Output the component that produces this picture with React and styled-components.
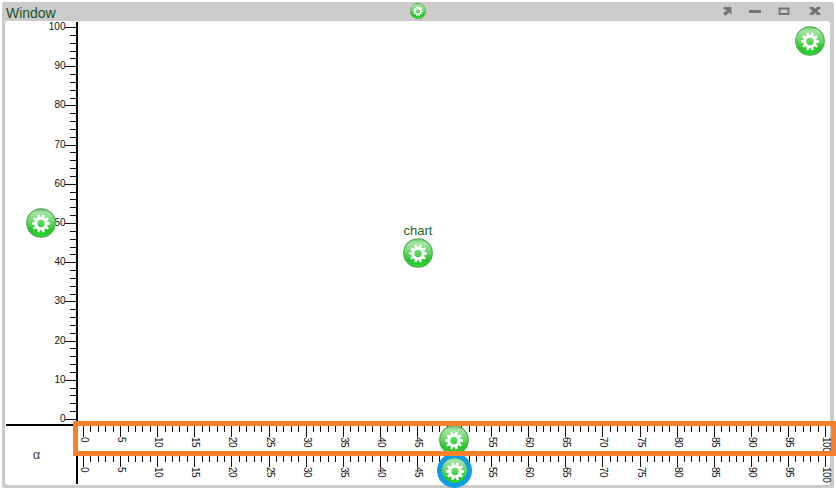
import React from "react";
import styled, { createGlobalStyle } from "styled-components";

const Global = createGlobalStyle`
  html, body { margin: 0; width: 836px; height: 488px; overflow: hidden; background: #fff; }
  * { box-sizing: border-box; }
`;

const Desktop = styled.div`
  position: relative;
  width: 836px;
  height: 488px;
  padding: 2px 2px 0 2px;
  font-family: "Liberation Sans", Arial, sans-serif;
  background: radial-gradient(circle, #cfe0d4 0.8px, transparent 1px) -1px -17px / 58.5px 119px #fff;
`;

const Window = styled.section`
  display: flex;
  flex-direction: column;
  width: 832px;
  height: 486px;
  padding: 0 4px 3px 3px;
  background: #cbcbcb;
  border-radius: 2px;
`;

const TitleBar = styled.header`
  display: grid;
  grid-template-columns: 1fr 16px 1fr;
  align-items: start;
  height: 19px;
  flex: none;
  padding-top: 1px;
`;

const Title = styled.h1`
  margin: 1px 0 0 1px;
  font-size: 14px;
  line-height: 19px;
  font-weight: 400;
  letter-spacing: -0.05px;
  color: #17521f;
`;

const Controls = styled.div`
  display: grid;
  grid-template-columns: 28px 29px 31px 12px;
  justify-content: end;
  padding: 3px 9px 0 0;
`;

const Control = styled.button`
  display: flex;
  width: 12px;
  height: 10px;
  padding: 0;
  border: 0;
  background: none;
`;

const Body = styled.main`
  display: grid;
  grid-template-columns: 71px 754px;
  grid-template-rows: 405px 59px;
  background: #fff;
  border-radius: 3px;
`;

const VerticalAxis = styled.div`
  display: flex;
  position: relative;
  margin-left: 1px;
  border-bottom: 2px solid #000;
`;

const Plot = styled.div`
  display: flex;
  flex-direction: column;
  align-items: center;
  position: relative;
  padding: 201px 73px 0 0;
  margin-top: 1px;
  border-left: 2px solid #000;
`;

const PlotTitle = styled.span`
  margin-left: 1px;
  font-size: 13px;
  line-height: 15px;
  color: #1a661f;
`;

const Corner = styled.div`
  display: flex;
  align-items: center;
  justify-content: center;
  padding: 0 8px 2px 0;
  font-size: 13px;
  color: #3c4a56;
`;

const Axes = styled.div`
  display: flex;
  flex-direction: column;
  height: 58px;
  border-left: 2px solid #000;
`;

const Badge = styled.span`
  position: absolute;
  display: flex;
  left: ${(p) => p.$x}px;
  top: ${(p) => p.$y}px;
`;

const Ring = styled(Badge)`
  border: 5px solid #109de4;
  border-radius: 50%;
  width: 35px;
  height: 35px;
  align-items: center;
  justify-content: center;
  background: #109de4;
  overflow: hidden;

  svg {
    flex: none;
    clip-path: circle(12.6px);
  }
`;

const Highlight = styled.div`
  position: absolute;
  left: 73px;
  top: 421px;
  width: 763px;
  height: 35px;
  border: 5px solid #fb802c;
`;

const Scale = styled.svg`
  display: block;
  flex: none;
  overflow: visible;
  font-size: 10px;
  fill: #111;
  letter-spacing: ${(p) => p.$tracking || 0}px;
`;

const teeth = Array.from({ length: 10 }, (_, i) => 18 + i * 36);

function Gear({ size = 30 }) {
  const id = React.useId();
  return (
    <svg width={size} height={size} viewBox="0 0 30 30">
      <defs>
        <linearGradient id={id} x1="0" y1="0" x2="0" y2="1">
          <stop offset="0" stopColor="#6cc56c" />
          <stop offset="0.15" stopColor="#a4e6a4" />
          <stop offset="0.48" stopColor="#62d862" />
          <stop offset="0.75" stopColor="#1fc726" />
          <stop offset="1" stopColor="#34d83a" />
        </linearGradient>
      </defs>
      <circle cx="15" cy="15" r="14.3" fill={`url(#${id})`} stroke="#4fa552" strokeWidth="1.1" />
      <circle cx="15" cy="15.5" r="5.2" fill="none" stroke="#fff" strokeWidth="3.1" />
      {teeth.map((a) => (
        <path key={a} d="M13.5 10.2 L13.8 6.5 H16.2 L16.5 10.2 Z" fill="#fff" transform={`rotate(${a} 15 15.5)`} />
      ))}
    </svg>
  );
}

function VerticalScale() {
  return (
    <Scale width="70" height="402" shapeRendering="crispEdges">
      {Array.from({ length: 51 }, (_, i) => {
        const y = Math.round(6 + i * 7.84);
        const major = i % 5 === 0;
        return (
          <g key={i}>
            <rect x={major ? 59 : 64} y={y} width={major ? 11 : 6} height="1" />
            {major && <text x="59.5" y={y + 3} textAnchor="end">{100 - i * 2}</text>}
          </g>
        );
      })}
    </Scale>
  );
}

function HorizontalScale({ height }) {
  return (
    <Scale width="752" height={height} shapeRendering="crispEdges" $tracking={-0.45}>
      {Array.from({ length: 101 }, (_, i) => {
        const x = Math.round(5 + i * 7.42);
        const major = i % 5 === 0;
        return (
          <g key={i}>
            <rect x={x} y="0" width="1" height={major ? 11 : 6} />
            {major && <text transform={`translate(${x - 2} 11) rotate(90)`}>{i}</text>}
          </g>
        );
      })}
    </Scale>
  );
}

export default function App() {
  return (
    <>
      <Global />
      <Desktop>
        <Window>
          <TitleBar>
            <Title>Window</Title>
            <Gear size={16} />
            <Controls>
              <Control aria-label="Detach">
                <svg width="12" height="10"><path d="M2.5 1H10.5V8.6L8.4 6.6L4.6 9.8L2 7.6L5.8 4.2L2.5 3Z" fill="#747474" /></svg>
              </Control>
              <Control aria-label="Minimize">
                <svg width="12" height="10"><path d="M0 4H12V7H0Z" fill="#747474" /></svg>
              </Control>
              <Control aria-label="Maximize">
                <svg width="12" height="10"><path d="M1.5 2.5H10.5V8H1.5Z" fill="none" stroke="#747474" strokeWidth="1.8" /></svg>
              </Control>
              <Control aria-label="Close">
                <svg width="12" height="10"><path d="M0.5 1H4.2L6 3L7.8 1H11.5V2.2L8.5 5L11.5 7.8V9H7.8L6 7L4.2 9H0.5V7.8L3.5 5L0.5 2.2Z" fill="#747474" /></svg>
              </Control>
            </Controls>
          </TitleBar>
          <Body>
            <VerticalAxis>
              <VerticalScale />
              <Badge $x={20} $y={187}><Gear /></Badge>
            </VerticalAxis>
            <Plot>
              <PlotTitle>chart</PlotTitle>
              <Gear />
              <Badge $x={717} $y={4}><Gear /></Badge>
            </Plot>
            <Corner>α</Corner>
            <Axes>
              <HorizontalScale height={30} />
              <HorizontalScale height={28} />
            </Axes>
          </Body>
        </Window>
        <Badge $x={439} $y={425}><Gear /></Badge>
        <Ring $x={437} $y={453}><Gear /></Ring>
        <Highlight />
      </Desktop>
    </>
  );
}
